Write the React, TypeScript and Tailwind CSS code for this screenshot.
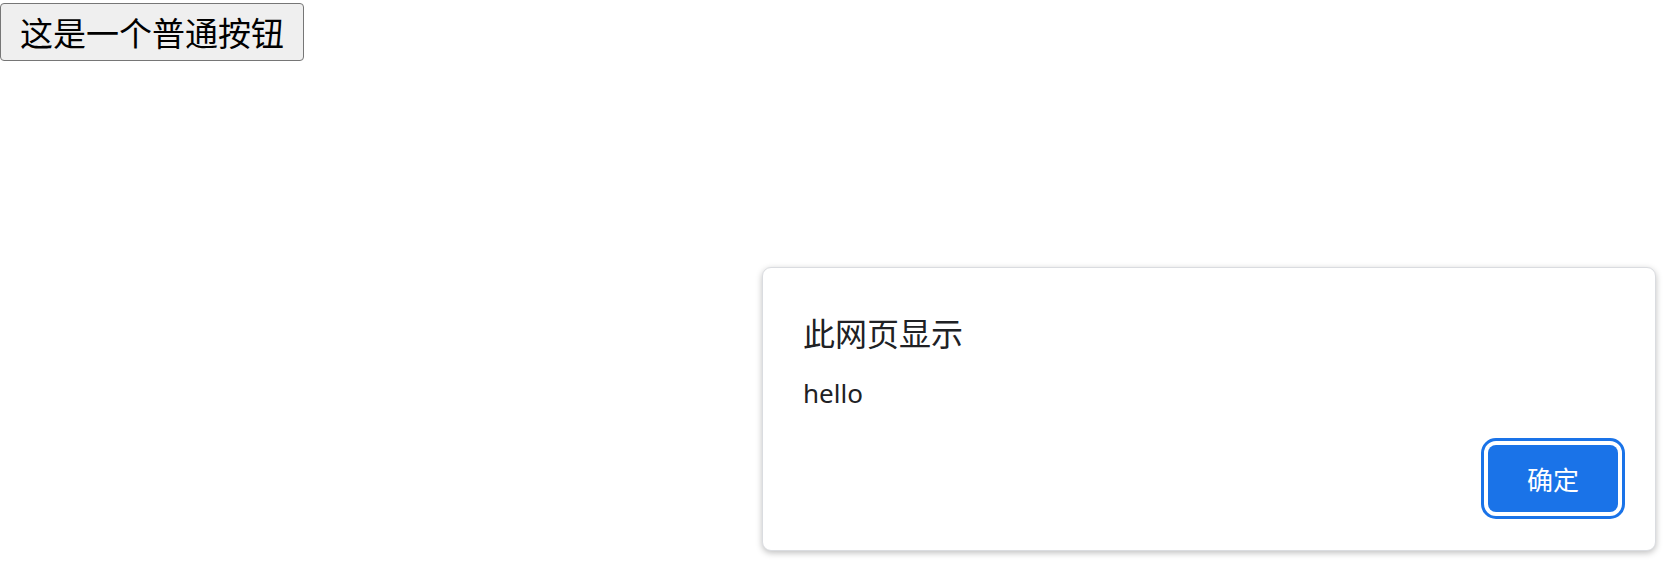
import React from "react";

export default function App() {
  return (
    <div className="relative w-[1675px] h-[565px] bg-white overflow-hidden font-['Noto_Sans_CJK_SC','Noto_Sans',sans-serif]">
      <button className="mt-[3px] h-[58px] px-[19px] bg-[#efefef] border border-[#767676] rounded-[4px] text-[33px] leading-none text-black font-['Noto_Sans_CJK_SC',sans-serif]">
        这是一个普通按钮
      </button>

      <div className="absolute left-[762px] top-[267px] w-[894px] h-[284px] bg-white border border-[#dadce0] rounded-[9px] shadow-[0_2px_6px_rgba(0,0,0,0.25)] flex flex-col px-[40px] pt-[40px] pb-[38px]">
        <div className="text-[32px] leading-[48px] text-[#202124] font-['Noto_Sans_CJK_SC','Noto_Sans',sans-serif]">
          此网页显示
        </div>
        <div className="mt-[19px] text-[26px] leading-[36px] text-[#202124] font-['Noto_Sans','Noto_Sans_CJK_SC',sans-serif]">
          hello
        </div>
        <div className="mt-auto flex justify-end">
          <button className="w-[130px] h-[67px] mr-[-3px] bg-[#1a73e8] text-white rounded-[8px] text-[26px] leading-none outline-[3px] outline-solid outline-[#1a73e8] outline-offset-[4px] font-['Noto_Sans_CJK_SC','Noto_Sans',sans-serif]">
            确定
          </button>
        </div>
      </div>
    </div>
  );
}
